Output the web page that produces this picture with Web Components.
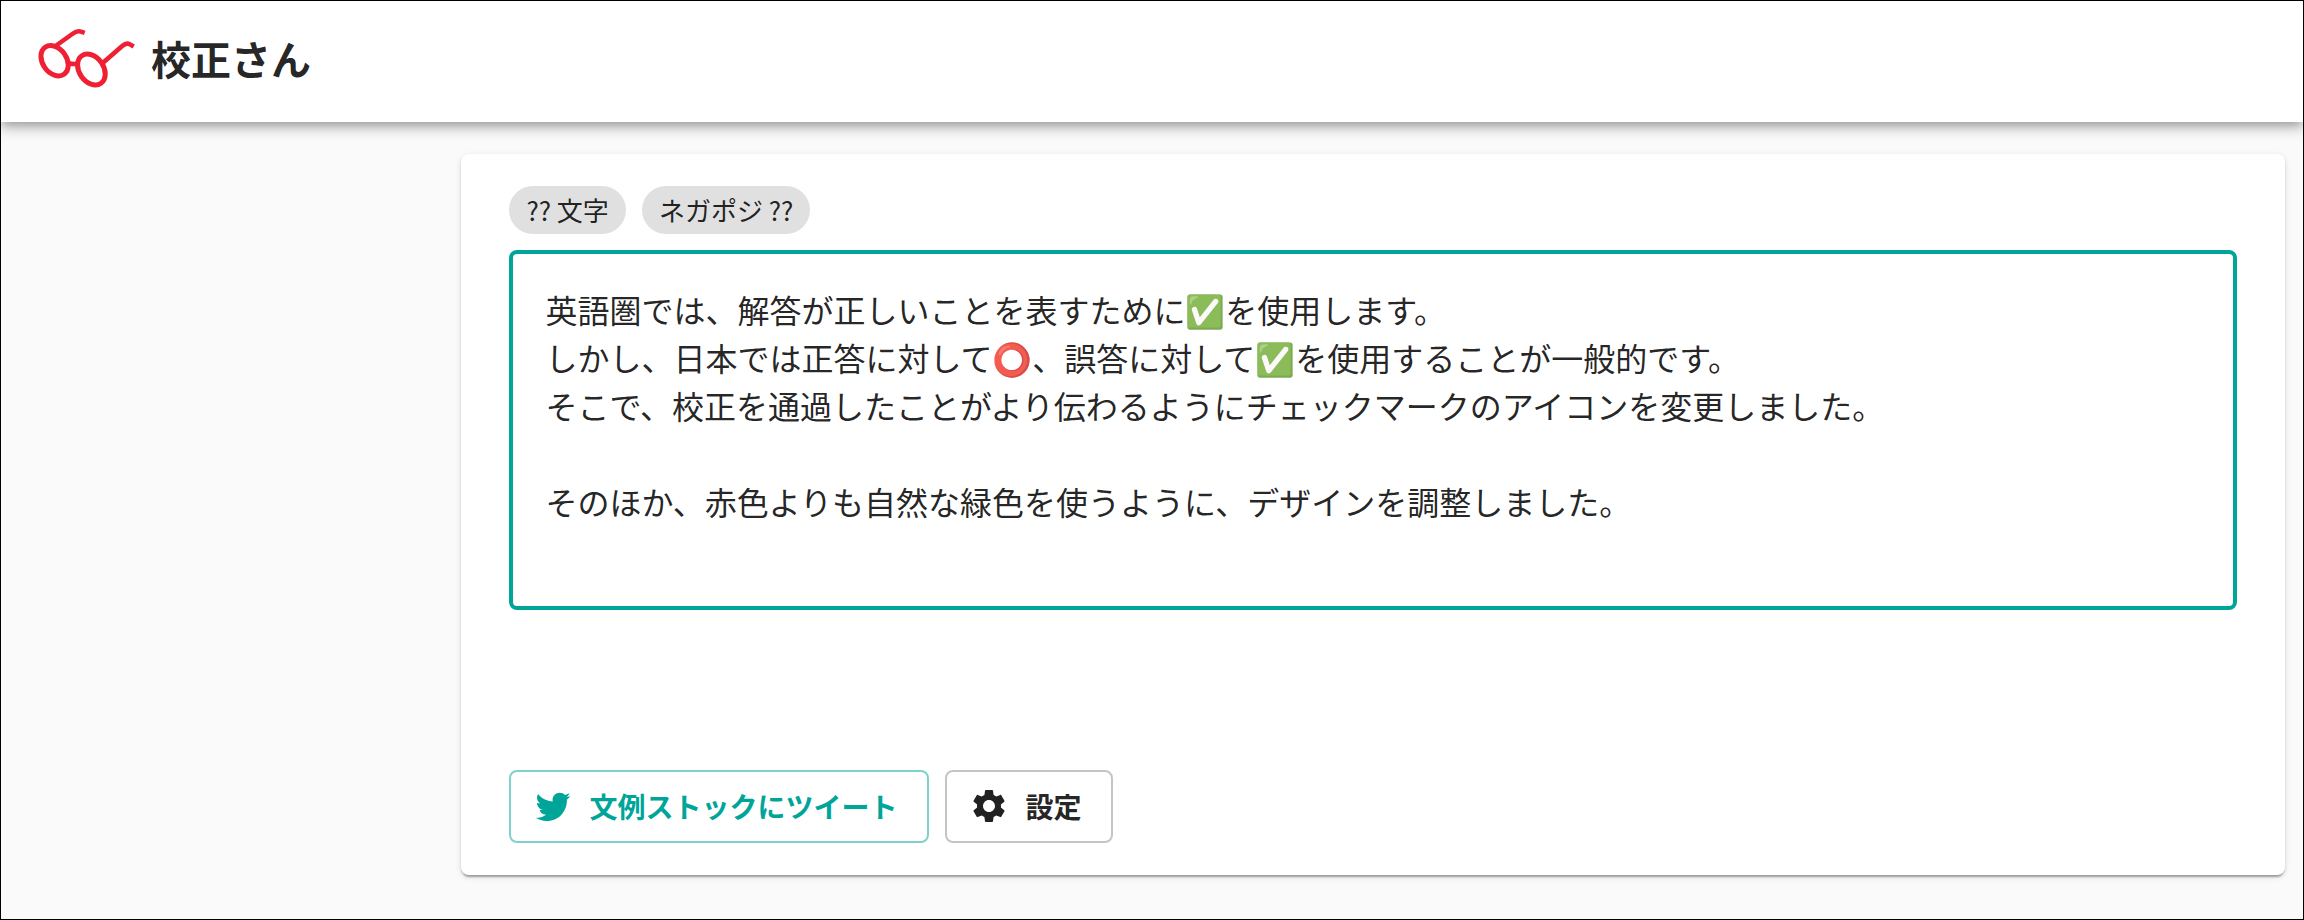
<!DOCTYPE html>
<html lang="ja">
<head>
<meta charset="utf-8">
<meta name="viewport" content="width=device-width, initial-scale=1">
<title>校正さん</title>
<style>
  * {
    box-sizing: border-box;
  }

  body {
    margin: 0;
    min-height: 100vh;
    border: 1px solid #000;
    background: #fafafa;
    color: rgba(0, 0, 0, 0.87);
    font-family: "Noto Sans CJK JP", "Noto Color Emoji", sans-serif;
  }
</style>
</head>
<body>
<app-header>校正さん</app-header>
<main>
  <proofread-card>
    <tag-chip slot="tags">?? 文字</tag-chip>
    <tag-chip slot="tags">ネガポジ ??</tag-chip>
    <text-editor></text-editor>
    <action-button slot="actions" icon="twitter" color="primary">文例ストックにツイート</action-button>
    <action-button slot="actions" icon="settings">設定</action-button>
  </proofread-card>
</main>

<script>
const ICONS = {
  twitter: 'M22.46 6c-.77.35-1.6.58-2.46.69.88-.53 1.56-1.37 1.88-2.38-.83.5-1.75.85-2.72 1.05C18.37 4.5 17.26 4 16 4c-2.35 0-4.27 1.92-4.27 4.29 0 .34.04.67.11.98C8.28 9.09 5.11 7.38 3 4.79c-.37.63-.58 1.37-.58 2.15 0 1.49.75 2.81 1.91 3.56-.71 0-1.37-.2-1.95-.5v.03c0 2.08 1.48 3.82 3.44 4.21a4.22 4.22 0 0 1-1.93.07 4.28 4.28 0 0 0 4 2.98 8.521 8.521 0 0 1-5.33 1.84c-.34 0-.68-.02-1.02-.06C3.44 20.29 5.7 21 8.12 21 16 21 20.33 14.46 20.33 8.79c0-.19 0-.37-.01-.56.84-.6 1.56-1.36 2.14-2.23z',
  settings: 'M19.14 12.94c.04-.3.06-.61.06-.94 0-.32-.02-.64-.07-.94l2.03-1.58c.18-.14.23-.41.12-.61l-1.92-3.32c-.12-.22-.37-.29-.59-.22l-2.39.96c-.5-.38-1.03-.7-1.62-.94l-.36-2.54c-.04-.24-.24-.41-.48-.41h-3.84c-.24 0-.43.17-.47.41l-.36 2.54c-.59.24-1.13.57-1.62.94l-2.39-.96c-.22-.08-.47 0-.59.22L2.74 8.87c-.12.21-.08.47.12.61l2.03 1.58c-.05.3-.09.63-.09.94s.02.64.07.94l-2.03 1.58c-.18.14-.23.41-.12.61l1.92 3.32c.12.22.37.29.59.22l2.39-.96c.5.38 1.03.7 1.62.94l.36 2.54c.05.24.24.41.48.41h3.84c.24 0 .44-.17.47-.41l.36-2.54c.59-.24 1.13-.56 1.62-.94l2.39.96c.22.08.47 0 .59-.22l1.92-3.32c.12-.22.07-.47-.12-.61l-2.01-1.58zM12 15.6c-1.98 0-3.6-1.62-3.6-3.6s1.62-3.6 3.6-3.6 3.6 1.62 3.6 3.6-1.62 3.6-3.6 3.6z'
};

const SAMPLE_TEXT = `英語圏では、解答が正しいことを表すために✅を使用します。
しかし、日本では正答に対して⭕、誤答に対して✅を使用することが一般的です。
そこで、校正を通過したことがより伝わるようにチェックマークのアイコンを変更しました。

そのほか、赤色よりも自然な緑色を使うように、デザインを調整しました。`;

class AppHeader extends HTMLElement {
    constructor() {
        super();
        this.attachShadow({ mode: 'open' });
    }

    connectedCallback() {
        this.shadowRoot.innerHTML = `
      <style>
        :host {
          display: block;
          position: relative;
          background: #fff;
          box-shadow: 0 4px 8px -2px rgba(0,0,0,0.2), 0 8px 10px rgba(0,0,0,0.14), 0 2px 20px rgba(0,0,0,0.12);
        }

        header {
          display: flex;
          align-items: center;
          gap: 16px;
          padding: 21px 36px 28px;
        }

        svg {
          width: 98px;
          height: 64px;
        }

        h1 {
          margin: 0;
          font-size: 40px;
          font-weight: 700;
          line-height: 72px;
        }
      </style>

      <header>
        <svg viewBox="0 0 98 64" fill="none" stroke="#ef2033" stroke-width="4.6" aria-hidden="true">
          <ellipse cx="17.6" cy="34.7" rx="12" ry="16.5" stroke-width="5" transform="rotate(-35 17.6 34.7)"/>
          <ellipse cx="54.4" cy="43.5" rx="12.2" ry="16.7" stroke-width="5" transform="rotate(-35 54.4 43.5)"/>
          <path d="M32 37.2Q36 38.4 40 37.8"/>
          <path d="M18.5 20L36 7.5Q40 4.5 44 5.6L47.7 6.9"/>
          <path d="M66.3 36.4L85.5 19.8Q89.5 16.2 93 18.4L96.7 20.6"/>
        </svg>
        <h1><slot></slot></h1>
      </header>
    `;
    }
}

class TagChip extends HTMLElement {
    constructor() {
        super();
        this.attachShadow({ mode: 'open' });
    }

    connectedCallback() {
        this.shadowRoot.innerHTML = `
      <style>
        :host {
          display: inline-flex;
          align-items: center;
          height: 48px;
          padding: 0 17px;
          border-radius: 24px;
          background: #e0e0e0;
          font-size: 26px;
          line-height: 40px;
          white-space: nowrap;
        }
      </style>
      <span><slot></slot></span>
    `;
    }
}

class TextEditor extends HTMLElement {
    constructor() {
        super();
        this.attachShadow({ mode: 'open' });
    }

    connectedCallback() {
        this.shadowRoot.innerHTML = `
      <style>
        :host {
          display: block;
        }

        textarea {
          display: block;
          box-sizing: border-box;
          width: 100%;
          margin: 0;
          padding: 31px 32px 33px;
          border: 4px solid #00a59a;
          border-radius: 8px;
          outline: none;
          resize: none;
          overflow: hidden;
          background: transparent;
          color: inherit;
          font-family: inherit;
          font-size: 32px;
          line-height: 48px;
        }
      </style>
      <textarea rows="6" aria-label="校正する文章" spellcheck="false"></textarea>
    `;
        this.shadowRoot.querySelector('textarea').value = SAMPLE_TEXT;
    }
}

class ActionButton extends HTMLElement {
    constructor() {
        super();
        this.attachShadow({ mode: 'open' });
    }

    connectedCallback() {
        const icon = ICONS[this.getAttribute('icon')];
        this.shadowRoot.innerHTML = `
      <style>
        :host {
          display: inline-flex;
          --main: rgba(0, 0, 0, 0.87);
          --border: rgba(0, 0, 0, 0.23);
        }

        :host([color="primary"]) {
          --main: #00a59a;
          --border: rgba(0, 165, 154, 0.5);
        }

        button {
          display: inline-flex;
          align-items: center;
          gap: 16px;
          margin: 0;
          padding: 10px 30px 11px 22px;
          border: 2px solid var(--border);
          border-radius: 8px;
          background: transparent;
          color: var(--main);
          font-family: inherit;
          font-size: 28px;
          font-weight: 700;
          line-height: 48px;
          white-space: nowrap;
          cursor: pointer;
        }

        svg {
          width: 40px;
          height: 40px;
          fill: currentColor;
        }
      </style>
      <button type="button">
        <svg viewBox="0 0 24 24" aria-hidden="true"><path d="${icon}"/></svg>
        <span><slot></slot></span>
      </button>
    `;
    }
}

class ProofreadCard extends HTMLElement {
    constructor() {
        super();
        this.attachShadow({ mode: 'open' });
    }

    connectedCallback() {
        this.shadowRoot.innerHTML = `
      <style>
        :host {
          display: block;
          margin: 32px 18px 44px 20%;
          padding: 32px 48px;
          border-radius: 8px;
          background: #fff;
          box-shadow: 0 4px 2px -2px rgba(0,0,0,0.2), 0 2px 2px rgba(0,0,0,0.14), 0 2px 6px rgba(0,0,0,0.12);
        }

        .row {
          display: flex;
          flex-wrap: wrap;
          gap: 16px;
        }

        .tags {
          margin-bottom: 16px;
        }

        .actions {
          margin-top: 160px;
        }
      </style>
      <div class="row tags"><slot name="tags"></slot></div>
      <slot></slot>
      <div class="row actions"><slot name="actions"></slot></div>
    `;
    }
}

customElements.define('app-header', AppHeader);
customElements.define('tag-chip', TagChip);
customElements.define('text-editor', TextEditor);
customElements.define('action-button', ActionButton);
customElements.define('proofread-card', ProofreadCard);
</script>
</body>
</html>
